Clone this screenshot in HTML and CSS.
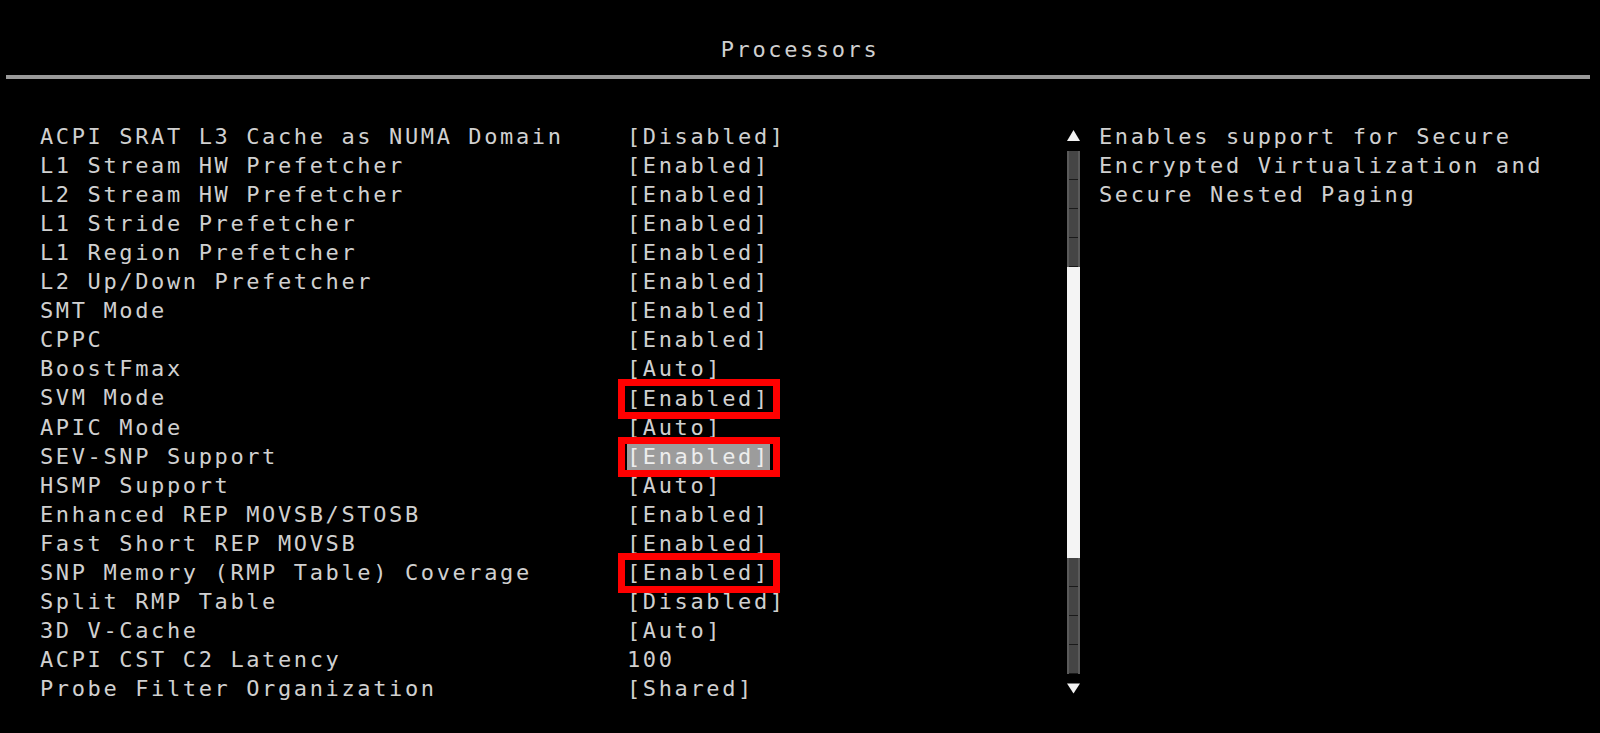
FILE: index.html
```html
<!DOCTYPE html>
<html lang="en">
<head>
    <meta charset="UTF-8">
    <meta name="viewport" content="width=device-width, initial-scale=1.0">
    <title>Processors</title>
    <link rel="stylesheet" href="styles.css">
</head>
<body>

    <!-- Page title -->
    <header class="page-header">
        <h1>Processors</h1>
    </header>
    <div class="rule"></div>

    <main class="setup">
        <div class="options">
            <div class="row"><span class="label">ACPI SRAT L3 Cache as NUMA Domain</span><span class="value">[Disabled]</span></div>
            <div class="row"><span class="label">L1 Stream HW Prefetcher</span><span class="value">[Enabled]</span></div>
            <div class="row"><span class="label">L2 Stream HW Prefetcher</span><span class="value">[Enabled]</span></div>
            <div class="row"><span class="label">L1 Stride Prefetcher</span><span class="value">[Enabled]</span></div>
            <div class="row"><span class="label">L1 Region Prefetcher</span><span class="value">[Enabled]</span></div>
            <div class="row"><span class="label">L2 Up/Down Prefetcher</span><span class="value">[Enabled]</span></div>
            <div class="row"><span class="label">SMT Mode</span><span class="value">[Enabled]</span></div>
            <div class="row"><span class="label">CPPC</span><span class="value">[Enabled]</span></div>
            <div class="row"><span class="label">BoostFmax</span><span class="value">[Auto]</span></div>
            <div class="row"><span class="label">SVM Mode</span><span class="value marked">[Enabled]</span></div>
            <div class="row"><span class="label">APIC Mode</span><span class="value">[Auto]</span></div>
            <div class="row"><span class="label">SEV-SNP Support</span><span class="value marked selected">[Enabled]</span></div>
            <div class="row"><span class="label">HSMP Support</span><span class="value">[Auto]</span></div>
            <div class="row"><span class="label">Enhanced REP MOVSB/STOSB</span><span class="value">[Enabled]</span></div>
            <div class="row"><span class="label">Fast Short REP MOVSB</span><span class="value">[Enabled]</span></div>
            <div class="row"><span class="label">SNP Memory (RMP Table) Coverage</span><span class="value marked">[Enabled]</span></div>
            <div class="row"><span class="label">Split RMP Table</span><span class="value">[Disabled]</span></div>
            <div class="row"><span class="label">3D V-Cache</span><span class="value">[Auto]</span></div>
            <div class="row"><span class="label">ACPI CST C2 Latency</span><span class="value">100</span></div>
            <div class="row"><span class="label">Probe Filter Organization</span><span class="value">[Shared]</span></div>
        </div>

        <!-- Scroll bar -->
        <div class="scrollbar">
            <div class="arrow arrow-up">
                <svg width="13" height="11" viewBox="0 0 13 11"><polygon points="6.5,0 13,11 0,11" fill="#f2f2f2"/></svg>
            </div>
            <div class="track track-top"></div>
            <div class="thumb"></div>
            <div class="track track-bottom"></div>
            <div class="arrow arrow-down">
                <svg width="14" height="11" viewBox="0 0 14 11"><polygon points="0,0 14,0 7,11" fill="#f2f2f2"/></svg>
            </div>
        </div>

        <div class="help">
            <p>Enables support for Secure</p>
            <p>Encrypted Virtualization and</p>
            <p>Secure Nested Paging</p>
        </div>
    </main>

</body>
</html>
```

FILE: styles.css
```css
:root {
    --text: #d0d0d0;
    --red: #ff0000;
    --row: 29.06px;
}
body {
    margin: 0;
    padding: 0;
    background-color: #000;
    color: var(--text);
    font-family: "DejaVu Sans Mono", "Liberation Mono", monospace;
    font-size: 22px;
    letter-spacing: 2.62px;
}
.page-header {
    padding-top: 35px;
    text-align: center;
}
.page-header h1 {
    margin: 0;
    font-size: 22px;
    font-weight: normal;
    line-height: var(--row);
}
.rule {
    margin: 11px 10px 0 6px;
    height: 4px;
    background-color: #9a9a9a;
}
.setup {
    display: flex;
    margin-top: 43px;
    padding-left: 40px;
}
.options {
    width: 1027px;
}
.row {
    display: grid;
    grid-template-columns: 587px auto;
    height: var(--row);
    line-height: var(--row);
    white-space: pre;
}
.value {
    justify-self: start;
    align-self: center;
    display: inline-block;
    position: relative;
    height: 27px;
    line-height: 27px;
}
.value.selected {
    background-color: #9c9c9c;
    color: #ededed;
}
.value.marked::after {
    content: "";
    position: absolute;
    top: -6px;
    bottom: -7px;
    left: -9px;
    right: -10px;
    border: 7px solid var(--red);
}
.scrollbar {
    display: flex;
    flex-direction: column;
    width: 13px;
}
.arrow {
    height: var(--row);
    display: flex;
    justify-content: center;
    align-items: flex-start;
    box-sizing: border-box;
}
.arrow-up {
    padding-top: 8px;
}
.arrow-down {
    padding-top: 9px;
}
.track {
    height: calc(var(--row) * 4);
    background:
        linear-gradient(to right, #5a5a5a 0 2px, transparent 2px 11px, #5a5a5a 11px 13px),
        repeating-linear-gradient(to bottom, #454545 0 28px, #1a1a1a 28px 29.06px);
}
.thumb {
    height: calc(var(--row) * 10);
    background-color: #f4f4f4;
}
.help {
    margin-left: 19px;
}
.help p {
    margin: 0;
    line-height: var(--row);
    white-space: pre;
}
```
